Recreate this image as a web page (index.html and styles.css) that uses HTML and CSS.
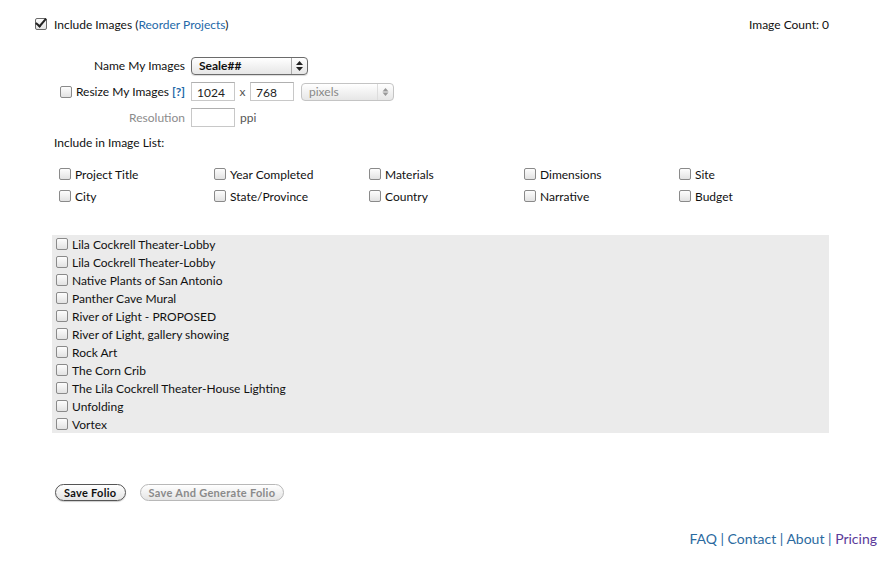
FILE: index.html
```html
<!DOCTYPE html>
<html>
<head>
<meta charset="utf-8">
<link rel="stylesheet" href="styles.css">
</head>
<body>
<div class="page">
  <div class="toprow">
    <label class="chk"><input type="checkbox" class="cb" checked><span>Include Images (<a href="#" class="link">Reorder Projects</a>)</span></label>
    <div class="count">Image Count: 0</div>
  </div>

  <div class="opts">
    <div class="lbl">Name My Images</div>
    <div class="field">
      <span class="selwrap sel-name">
        <select class="sel"><option>Seale##</option></select>
        <svg class="arrows" width="9" height="12" viewBox="0 0 9 12"><path d="M4.5 1 L8 5 H1 Z M4.5 11 L8 7 H1 Z" fill="#222"/></svg>
      </span>
    </div>

    <div class="lbl"><input type="checkbox" class="cb cb-resize"><span>Resize My Images</span><a href="#" class="help">[?]</a></div>
    <div class="field">
      <input class="txt" type="text" value="1024"><span class="x">x</span><input class="txt" type="text" value="768">
      <span class="selwrap sel-px">
        <select class="sel dis"><option>pixels</option></select>
        <svg class="arrows" width="9" height="12" viewBox="0 0 9 12"><path d="M4.5 2 L7.5 5.5 H1.5 Z M4.5 10 L7.5 6.5 H1.5 Z" fill="#999"/></svg>
      </span>
    </div>

    <div class="lbl grey">Resolution</div>
    <div class="field"><input class="txt" type="text" value=""><span class="ppi">ppi</span></div>
  </div>

  <div class="listhead">Include in Image List:</div>
  <div class="fields">
    <label class="chk"><input type="checkbox" class="cb">Project Title</label>
    <label class="chk"><input type="checkbox" class="cb">Year Completed</label>
    <label class="chk"><input type="checkbox" class="cb">Materials</label>
    <label class="chk"><input type="checkbox" class="cb">Dimensions</label>
    <label class="chk"><input type="checkbox" class="cb">Site</label>
    <label class="chk"><input type="checkbox" class="cb">City</label>
    <label class="chk"><input type="checkbox" class="cb">State/Province</label>
    <label class="chk"><input type="checkbox" class="cb">Country</label>
    <label class="chk"><input type="checkbox" class="cb">Narrative</label>
    <label class="chk"><input type="checkbox" class="cb">Budget</label>
  </div>

  <div class="projects">
    <label class="chk prow"><input type="checkbox" class="cb">Lila Cockrell Theater-Lobby</label>
    <label class="chk prow"><input type="checkbox" class="cb">Lila Cockrell Theater-Lobby</label>
    <label class="chk prow"><input type="checkbox" class="cb">Native Plants of San Antonio</label>
    <label class="chk prow"><input type="checkbox" class="cb">Panther Cave Mural</label>
    <label class="chk prow"><input type="checkbox" class="cb">River of Light - PROPOSED</label>
    <label class="chk prow"><input type="checkbox" class="cb">River of Light, gallery showing</label>
    <label class="chk prow"><input type="checkbox" class="cb">Rock Art</label>
    <label class="chk prow"><input type="checkbox" class="cb">The Corn Crib</label>
    <label class="chk prow"><input type="checkbox" class="cb">The Lila Cockrell Theater-House Lighting</label>
    <label class="chk prow"><input type="checkbox" class="cb">Unfolding</label>
    <label class="chk prow"><input type="checkbox" class="cb">Vortex</label>
  </div>

  <div class="buttons">
    <button class="btn">Save Folio</button>
    <button class="btn btn-dis" disabled>Save And Generate Folio</button>
  </div>

  <div class="footer">
    <a href="#" class="flink">FAQ</a> | <a href="#" class="flink">Contact</a> | <a href="#" class="flink">About</a> | <a href="#" class="flink visited">Pricing</a>
  </div>
</div>
</body>
</html>
```

FILE: styles.css
```css
html, body {
  margin: 0;
  padding: 0;
  background: #fff;
}
body {
  font-family: Lato, "Open Sans", sans-serif;
  font-size: 12px;
  color: #111;
}
.page {
  width: 894px;
  height: 561px;
  padding: 15px 0 0 35px;
  box-sizing: border-box;
}
a { text-decoration: none; }
.link { color: #2468a8; }

.cb {
  -webkit-appearance: none;
  appearance: none;
  width: 12px;
  height: 12px;
  margin: 0;
  border: 1px solid #8a8a8a;
  border-radius: 2px;
  background: linear-gradient(#fdfdfd, #e2e2e2);
  box-sizing: border-box;
  flex: none;
  position: relative;
}
.cb:checked {
  border-color: #6a6a6a;
}
.cb:checked::after {
  content: "";
  position: absolute;
  left: 2px;
  top: -3px;
  width: 4px;
  height: 9px;
  border-right: 2px solid #222;
  border-bottom: 2px solid #222;
  transform: rotate(40deg);
}

.chk {
  display: flex;
  align-items: center;
  gap: 4px;
  white-space: nowrap;
}

.toprow {
  display: flex;
  justify-content: space-between;
  align-items: center;
  height: 18px;
  width: 794px;
}
.toprow .chk { gap: 7px; }
.count { font-size: 12px; }

.opts {
  display: grid;
  grid-template-columns: 150px auto;
  column-gap: 6px;
  grid-auto-rows: 19px;
  row-gap: 7px;
  margin-top: 23px;
  align-items: center;
}
.lbl {
  display: flex;
  justify-content: flex-end;
  align-items: center;
  white-space: nowrap;
}
.lbl .cb-resize { margin-right: 4px; }
.help { color: #2468a8; font-weight: 700; margin-left: 3px; }
.grey { color: #8c8c8c; }
.field {
  display: flex;
  align-items: center;
  height: 19px;
}
.txt {
  width: 44px;
  height: 19px;
  box-sizing: border-box;
  border: 1px solid #c8c8c8;
  border-top-color: #b0b0b0;
  padding: 1px 0 0 5px;
  font-family: Lato, sans-serif;
  font-size: 12px;
  color: #222;
  margin: 0;
}
.x { width: 15px; text-align: center; color: #555; }
.ppi { margin-left: 5px; color: #555; }

.selwrap {
  position: relative;
  display: inline-block;
  height: 18px;
}
.sel {
  -webkit-appearance: none;
  appearance: none;
  height: 18px;
  box-sizing: border-box;
  border: 1px solid #6b6b6b;
  border-radius: 4px;
  background: linear-gradient(#ffffff, #e6e6e6);
  font-family: Lato, sans-serif;
  font-size: 12px;
  color: #111;
  padding: 0 0 0 7px;
  margin: 0;
  box-shadow: 0 1px 1px rgba(0,0,0,0.15);
}
.sel-name .sel {
  width: 117px;
  font-weight: 700;
}
.sel-name::after {
  content: "";
  position: absolute;
  right: 16px;
  top: 1px;
  bottom: 1px;
  width: 1px;
  background: #aaa;
}
.sel-px { margin-left: 7px; }
.sel-px .sel {
  width: 93px;
  border-color: #c4c4c4;
  color: #888;
  box-shadow: none;
}
.sel-px::after {
  content: "";
  position: absolute;
  right: 16px;
  top: 1px;
  bottom: 1px;
  width: 1px;
  background: #ddd;
}
.arrows {
  position: absolute;
  right: 4px;
  top: 3px;
  pointer-events: none;
}

.listhead {
  margin: 7px 0 0 19px;
  height: 18px;
  line-height: 18px;
}
.fields {
  display: grid;
  grid-template-columns: repeat(5, 155px);
  grid-auto-rows: 22px;
  margin: 11px 0 0 24px;
  align-items: center;
}

.projects {
  margin: 28px 0 0 17px;
  width: 777px;
  height: 198px;
  background: #ebebeb;
  padding: 0 0 0 4px;
  box-sizing: border-box;
}
.prow {
  height: 18px;
}

.buttons {
  display: flex;
  gap: 14px;
  margin: 51px 0 0 20px;
}
.btn {
  height: 17px;
  padding: 0 8px;
  border: 1px solid #555;
  border-radius: 9px;
  background: linear-gradient(#ffffff, #e4e4e4);
  font-family: Lato, sans-serif;
  font-weight: 700;
  font-size: 11px;
  letter-spacing: 0.3px;
  color: #111;
  line-height: 15px;
  box-shadow: 0 1px 1px rgba(0,0,0,0.2);
}
.btn-dis {
  border-color: #b8b8b8;
  color: #8a8a8a;
  box-shadow: none;
}

.footer {
  margin-top: 29px;
  width: 842px;
  text-align: right;
  font-size: 14px;
  color: #2b6aa0;
}
.flink { color: #2b6aa0; }
.flink.visited { color: #5b3a9a; }
```
